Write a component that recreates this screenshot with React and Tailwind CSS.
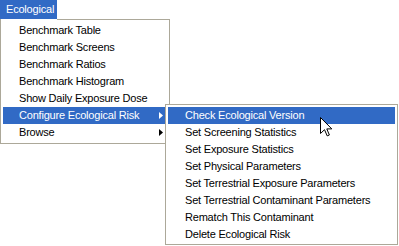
import React from "react";

const mainItems = [
  "Benchmark Table",
  "Benchmark Screens",
  "Benchmark Ratios",
  "Benchmark Histogram",
  "Show Daily Exposure Dose",
  "Configure Ecological Risk",
  "Browse",
];

const subItems = [
  "Check Ecological Version",
  "Set Screening Statistics",
  "Set Exposure Statistics",
  "Set Physical Parameters",
  "Set Terrestrial Exposure Parameters",
  "Set Terrestrial Contaminant Parameters",
  "Rematch This Contaminant",
  "Delete Ecological Risk",
];

function Arrow({ white }) {
  return (
    <svg width="4" height="7" viewBox="0 0 4 7" className="block">
      <polygon points="0,0 4,3.5 0,7" fill={white ? "#ffffff" : "#000000"} />
    </svg>
  );
}

export default function App() {
  return (
    <div
      className="relative w-[399px] h-[246px] bg-white overflow-hidden text-[11px] tracking-[-0.2px] text-black"
      style={{ fontFamily: '"Liberation Sans", Arial, sans-serif' }}
    >
      <div className="w-[57px] h-[19px] bg-[#316ac5] text-white pl-[6px] leading-[19px]">
        Ecological
      </div>
      <div className="w-[170px] border-x border-b border-[#aca899] bg-white">
        <div className="flex h-px">
          <div className="w-[56px]" />
          <div className="flex-1 bg-[#aca899]" />
        </div>
        <div className="px-[2px] py-[2px]">
          {mainItems.map((t, i) => {
            const hl = i === 5;
            const sub = i >= 5;
            return (
              <div
                key={t}
                className={`flex items-center justify-between h-[17px] pl-[16px] pr-[4px] ${
                  hl ? "bg-[#316ac5] text-white" : ""
                }`}
              >
                <span className="leading-[17px] whitespace-nowrap">{t}</span>
                {sub && <Arrow white={hl} />}
              </div>
            );
          })}
        </div>
      </div>

      <div className="absolute left-[165px] top-[104px] w-[233px] border border-[#aca899] bg-white pt-[2px] pb-[1px] px-[2px]">
        {subItems.map((t, i) => (
          <div
            key={t}
            className={`h-[17px] pl-[17px] leading-[17px] whitespace-nowrap ${
              i === 0 ? "bg-[#316ac5] text-white" : ""
            }`}
          >
            {t}
          </div>
        ))}
      </div>

      <svg
        className="absolute left-[320px] top-[117px]"
        width="13"
        height="21"
        viewBox="0 0 13 21"
      >
        <path
          d="M0.5 0.5 L0.5 16.5 L4.5 12.7 L7.2 18.9 L9.4 18 L6.8 11.9 L11.8 11.9 Z"
          fill="#ffffff"
          stroke="#000000"
          strokeWidth="1"
          strokeLinejoin="miter"
        />
      </svg>
    </div>
  );
}
